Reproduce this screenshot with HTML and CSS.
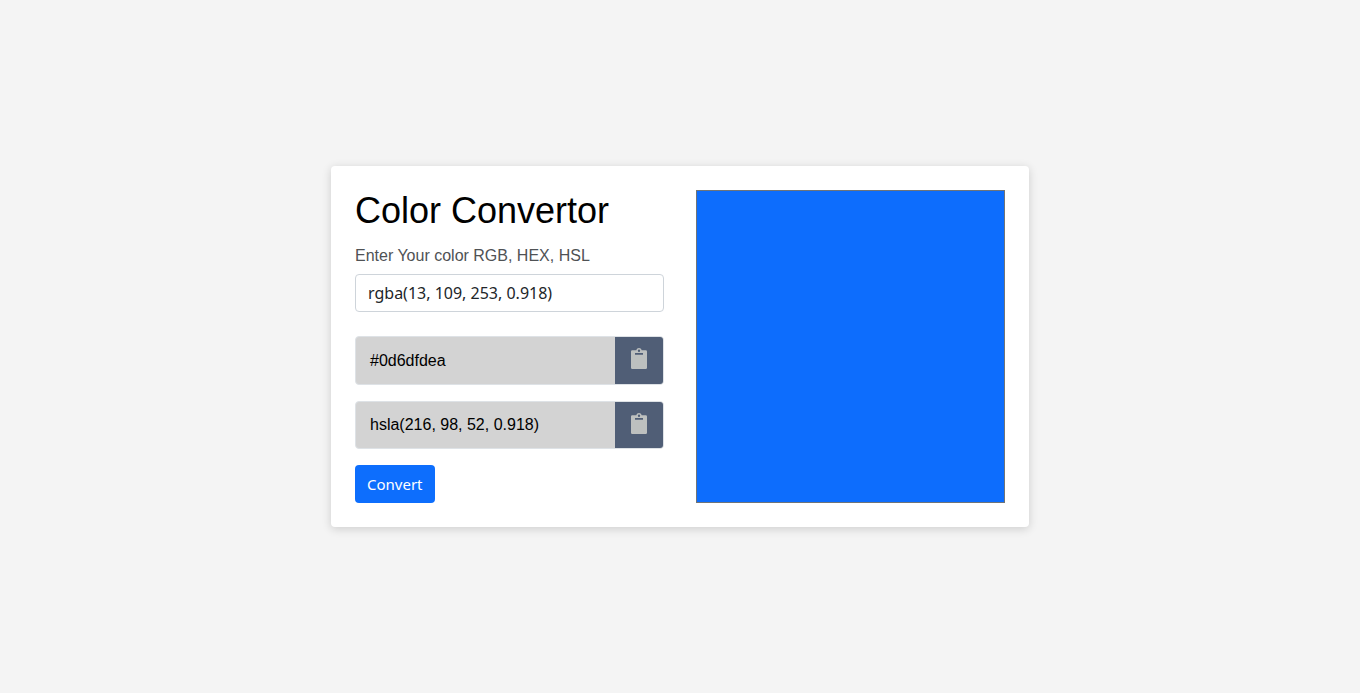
FILE: index.html
```html
<!DOCTYPE html>
<html lang="en">
<head>
<meta charset="utf-8">
<title>Color Convertor</title>
<link rel="stylesheet" href="styles.css">
</head>
<body>
<main class="card">
  <form class="converter">
    <h1 class="title">Color Convertor</h1>
    <label class="label" for="color">Enter Your color RGB, HEX, HSL</label>
    <input class="field" id="color" type="text" value="rgba(13, 109, 253, 0.918)">
    <div class="result">
      <output class="value">#0d6dfdea</output>
      <button class="copy" type="button" aria-label="Copy hex value">
        <svg class="icon" viewBox="0 0 16 21"><path fill-rule="evenodd" d="M1.300 2.300H5.300C5.800 0.800 6.700 0 8 0S10.200 0.800 10.700 2.300H14.700Q16 2.300 16 3.600V19.700Q16 21 14.700 21H1.300Q0 21 0 19.700V3.600Q0 2.300 1.300 2.300ZM8 1.500A1.200 1.200 0 1 0 8 3.900A1.200 1.200 0 1 0 8 1.500ZM4 5V6.800H12V5Z"/></svg>
      </button>
    </div>
    <div class="result">
      <output class="value">hsla(216, 98, 52, 0.918)</output>
      <button class="copy" type="button" aria-label="Copy HSL value">
        <svg class="icon" viewBox="0 0 16 21"><path fill-rule="evenodd" d="M1.300 2.300H5.300C5.800 0.800 6.700 0 8 0S10.200 0.800 10.700 2.300H14.700Q16 2.300 16 3.600V19.700Q16 21 14.700 21H1.300Q0 21 0 19.700V3.600Q0 2.300 1.300 2.300ZM8 1.500A1.200 1.200 0 1 0 8 3.900A1.200 1.200 0 1 0 8 1.500ZM4 5V6.800H12V5Z"/></svg>
      </button>
    </div>
    <button class="convert" type="button">Convert</button>
  </form>
  <div class="preview"></div>
</main>
</body>
</html>
```
FILE: styles.css
```css
* {
  box-sizing: border-box;
}

body {
  margin: 0;
  min-height: 100vh;
  display: flex;
  align-items: center;
  justify-content: center;
  background: #f4f4f4;
  color: #000;
  font: 16px/24px "Liberation Sans", Arial, sans-serif;
}

.card {
  display: grid;
  grid-template-columns: 1fr 1fr;
  gap: 32px;
  width: 100%;
  max-width: 698px;
  padding: 24px;
  background: #fff;
  border-radius: 4px;
  box-shadow: 0 2px 10px rgba(0, 0, 0, 0.16);
}

.converter {
  display: flex;
  flex-direction: column;
  align-items: stretch;
}

.title {
  margin: 0 0 12px;
  font-size: 36px;
  line-height: 42px;
  font-weight: 400;
}

.label {
  margin-bottom: 6px;
  color: #4f5255;
}

.field {
  width: 100%;
  height: 38px;
  margin-bottom: 24px;
  padding: 0 12px;
  border: 1px solid #ced4da;
  border-radius: 4px;
  color: #212529;
  font: 16px/24px "Noto Sans", sans-serif;
}

.result {
  display: flex;
  min-height: 49px;
  margin-bottom: 16px;
  border: 1px solid #dee2e6;
  border-radius: 4px;
  background: #d3d3d3;
  overflow: hidden;
}

.result + .result {
  min-height: 48px;
}

.value {
  flex: 1;
  align-self: center;
  padding: 0 14px;
}

.copy {
  display: flex;
  align-items: center;
  justify-content: center;
  width: 48px;
  padding: 0 0 4px;
  border: 0;
  background: #505e76;
}

.icon {
  width: 16px;
  height: 21px;
  fill: #bdc0bf;
}

.convert {
  align-self: flex-start;
  height: 38px;
  padding: 0 12px;
  border: 0;
  border-radius: 4px;
  background: #0d6efd;
  color: #fff;
  font: 15px/24px "Noto Sans", sans-serif;
}

.preview {
  border: 1px solid #6f7478;
  background: #0d6dfd;
}
```
